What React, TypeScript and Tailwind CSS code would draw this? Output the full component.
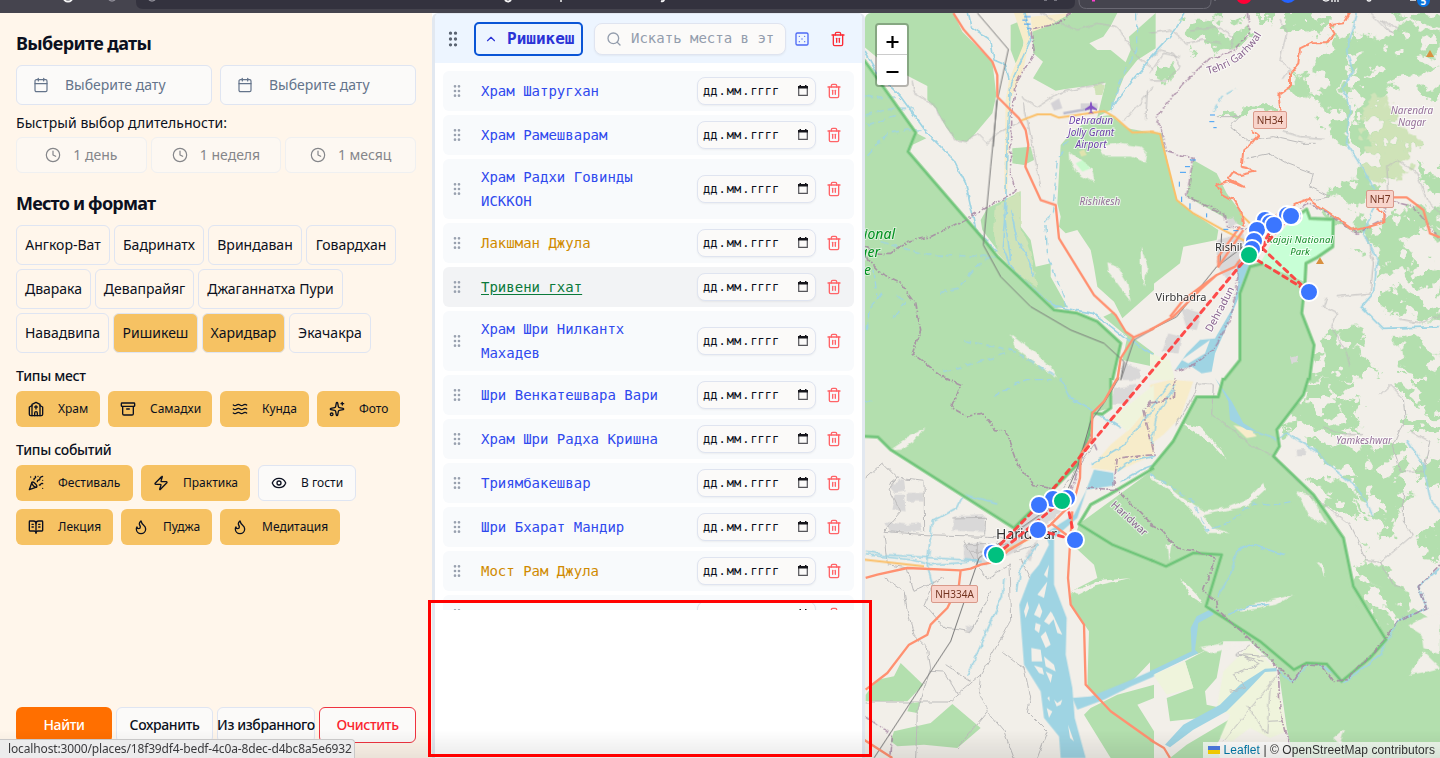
import {
  Archive,
  BookOpenText,
  Calendar,
  ChevronUp,
  Clock,
  Dice5,
  Eye,
  Flame,
  GripVertical,
  PartyPopper,
  Search,
  Sparkles,
  Trash2,
  Waves,
  Zap,
} from "lucide-react";
import type { ComponentType, SVGProps } from "react";

type IconType = ComponentType<{ size?: number; className?: string }>;

function Church({ size = 16, className }: { size?: number; className?: string }) {
  return (
    <svg
      width={size}
      height={size}
      viewBox="0 0 24 24"
      fill="none"
      stroke="currentColor"
      strokeWidth="2"
      strokeLinecap="round"
      strokeLinejoin="round"
      className={className}
    >
      <path d="m18 7 4 2v11a2 2 0 0 1-2 2H4a2 2 0 0 1-2-2V9l4-2" />
      <path d="M14 22v-4a2 2 0 0 0-4 0v4" />
      <path d="M18 22V5l-6-3-6 3v17" />
      <path d="M12 7v5M10 9h4" />
    </svg>
  );
}

type Chip = { label: string; width: string; active?: boolean; icon?: IconType };

const cityRows: Chip[][] = [
  [
    { label: "Ангкор-Ват", width: "w-[94px]" },
    { label: "Бадринатх", width: "w-[90px]" },
    { label: "Вриндаван", width: "w-[94px]" },
    { label: "Говардхан", width: "w-[90px]" },
  ],
  [
    { label: "Дварака", width: "w-[75px]" },
    { label: "Девапрайяг", width: "w-[99px]" },
    { label: "Джаганнатха Пури", width: "w-[145px]" },
  ],
  [
    { label: "Навадвипа", width: "w-[93px]" },
    { label: "Ришикеш", width: "w-[85px]", active: true },
    { label: "Харидвар", width: "w-[83px]", active: true },
    { label: "Экачакра", width: "w-[82px]" },
  ],
];

const placeTypes: Chip[] = [
  { label: "Храм", width: "w-[84px]", active: true, icon: Church },
  { label: "Самадхи", width: "w-[104px]", active: true, icon: Archive },
  { label: "Кунда", width: "w-[89px]", active: true, icon: Waves },
  { label: "Фото", width: "w-[83px]", active: true, icon: Sparkles },
];

const eventRows: Chip[][] = [
  [
    { label: "Фестиваль", width: "w-[117px]", active: true, icon: PartyPopper },
    { label: "Практика", width: "w-[109px]", active: true, icon: Zap },
    { label: "В гости", width: "w-[98px]", icon: Eye },
  ],
  [
    { label: "Лекция", width: "w-[97px]", active: true, icon: BookOpenText },
    { label: "Пуджа", width: "w-[91px]", active: true, icon: Flame },
    { label: "Медитация", width: "w-[120px]", active: true, icon: Flame },
  ],
];

type Place = { name: string; tone: string; tall?: boolean; hovered?: boolean };

const BLUE = "text-[#2f49ee]";
const AMBER = "text-[#d08a00]";

const places: Place[] = [
  { name: "Храм Шатругхан", tone: BLUE },
  { name: "Храм Рамешварам", tone: BLUE },
  { name: "Храм Радхи Говинды ИСККОН", tone: BLUE, tall: true },
  { name: "Лакшман Джула", tone: AMBER },
  { name: "Тривени гхат", tone: "text-[#0b7a3b] underline underline-offset-2", hovered: true },
  { name: "Храм Шри Нилкантх Махадев", tone: BLUE, tall: true },
  { name: "Шри Венкатешвара Вари", tone: BLUE },
  { name: "Храм Шри Радха Кришна", tone: BLUE },
  { name: "Триямбакешвар", tone: BLUE },
  { name: "Шри Бхарат Мандир", tone: BLUE },
  { name: "Мост Рам Джула", tone: AMBER },
  { name: "Храм Бхараты", tone: "text-[#8f9cf6]" },
];

function BrowserBar() {
  return (
    <div className="h-[13px] w-full shrink-0 overflow-hidden bg-[#45444e]">
      <svg width="1440" height="13" viewBox="0 0 1440 13" className="block">
        <path d="M136 0h939v2q0 7-7 7H143q-7 0-7-7z" fill="#33323e" />
        <path d="M1079 -5v6q0 7.500 7.500 7.500h117q7.500 0 7.500-7.500v-6" fill="none" stroke="#6a6973" />
        <circle cx="68" cy="-3" r="4.500" fill="none" stroke="#f4f4f5" strokeWidth="2" />
        <path d="M109 0q3 2 6 0M149 0q3 2 6 0M1044 0h3M1054 0h3" stroke="#8d8c96" strokeWidth="1.500" fill="none" />
        <path d="M505 0q3 3 6 0M661 1q3 1 3-2" stroke="#f4f4f5" strokeWidth="2" fill="none" />
        <path d="M561 0v2" stroke="#f4f4f5" strokeWidth="1.500" />
        <path d="M1092 0h3" stroke="#ff3fd0" strokeWidth="3" />
        <path d="M1215 0v1" stroke="#85848d" />
        <circle cx="1244" cy="-4" r="8" fill="#ff0035" />
        <circle cx="1288" cy="-6" r="9" fill="#2463ff" />
        <path d="M1323 0q3 2 6 0M1332 0v2M1335 0v2M1338 0v2M1367 0q2 2 4 0M1410 0h6" stroke="#f4f4f5" strokeWidth="1.400" fill="none" />
        <circle cx="1423.500" cy="0.500" r="6.500" fill="#0a74e0" />
        <text x="1420.500" y="4.500" fill="#fff" fontSize="10" fontWeight="700" fontFamily="Noto Sans">5</text>
      </svg>
    </div>
  );
}

function DateButton() {
  return (
    <div className="flex h-10 flex-1 items-center gap-4 rounded-md border border-[#dfe5f2] bg-[#fbfaf9] pl-4 text-[#64748b]">
      <Calendar size={16} strokeWidth={1.8} />
      <span className="pb-0.5 text-[14px]">Выберите дату</span>
    </div>
  );
}

function TypeChip({ chip }: { chip: Chip }) {
  const Icon = chip.icon as IconType;
  return (
    <div
      className={`flex h-9 items-center gap-[14px] rounded-md text-[12px] whitespace-nowrap ${chip.width} ${
        chip.active ? "bg-[#f6c263] pl-3" : "border border-[#dfe5f2] bg-[#fbfaf9] pl-[12px]"
      }`}
    >
      <Icon size={16} className="shrink-0" />
      <span>{chip.label}</span>
    </div>
  );
}

function Filters() {
  return (
    <aside className="flex w-[432px] shrink-0 flex-col bg-[#fff6eb] px-4 pt-4 text-[#0b1020]">
      <h2 className="h-7 text-[18px] leading-7 font-bold tracking-[-0.6px]">Выберите даты</h2>
      <div className="mt-2 flex gap-2">
        <DateButton />
        <DateButton />
      </div>
      <div className="mt-2 h-5 text-[14px] leading-5 tracking-[0.04px]">Быстрый выбор длительности:</div>
      <div className="mt-1 flex gap-1">
        {["1 день", "1 неделя", "1 месяц"].map((label) => (
          <div
            key={label}
            className="flex h-9 flex-1 items-center justify-center gap-3 rounded-md border border-[#eff0f1] bg-[#fdf8f2] text-[14px] text-[#85868a]"
          >
            <Clock size={16} strokeWidth={1.8} />
            <span className="pb-0.5">{label}</span>
          </div>
        ))}
      </div>
      <h2 className="mt-4 h-7 text-[18px] leading-7 font-bold tracking-[-0.8px]">Место и формат</h2>
      <div className="mt-2 flex flex-col gap-1">
        {cityRows.map((row, i) => (
          <div key={i} className="flex gap-1">
            {row.map((c) => (
              <div
                key={c.label}
                className={`flex h-10 items-center justify-center rounded-md border border-[#dfe5f2] pb-0.5 text-[14px] whitespace-nowrap ${c.width} ${
                  c.active ? "bg-[#f6c263]" : ""
                }`}
              >
                {c.label}
              </div>
            ))}
          </div>
        ))}
      </div>
      <h3 className="mt-[13px] h-5 text-[14px] leading-5 font-medium tracking-[-0.3px]">Типы мест</h3>
      <div className="mt-[5px] flex gap-2">
        {placeTypes.map((c) => (
          <TypeChip key={c.label} chip={c} />
        ))}
      </div>
      <h3 className="mt-[13px] h-5 text-[14px] leading-5 font-medium tracking-[-0.3px]">Типы событий</h3>
      <div className="mt-[5px] flex flex-col gap-2">
        {eventRows.map((row, i) => (
          <div key={i} className="flex gap-2">
            {row.map((c) => (
              <TypeChip key={c.label} chip={c} />
            ))}
          </div>
        ))}
      </div>
      <div className="mt-auto mb-[15px] flex gap-1 text-[14px] font-medium tracking-[-0.38px] whitespace-nowrap">
        <div className="flex h-9 w-24 items-center justify-center rounded-md bg-[#ff6f00] pb-0.5 text-white">Найти</div>
        <div className="flex h-9 w-[97px] items-center justify-center rounded-md border border-[#dfe5f2] bg-[#fbfaf9] pb-0.5">Сохранить</div>
        <div className="flex h-9 w-[98px] items-center justify-center rounded-md border border-[#dfe5f2] bg-[#fbfaf9] pb-0.5">Из избранного</div>
        <div className="flex h-9 w-[97px] items-center justify-center rounded-md border border-[#ef3340] bg-[#fbfaf9] pb-0.5 text-[#fa2430]">Очистить</div>
      </div>
    </aside>
  );
}

function DateField() {
  return (
    <div className="flex h-7 w-[119px] shrink-0 items-center rounded-lg border border-[#dfe4f0] bg-[#fbfaf9] pl-1 text-[12px] text-[#0b1020] shadow-xs">
      <span className="px-px">дд</span>.<span className="px-px">мм</span>.<span className="px-px">гггг</span>
      <svg width="10" height="11" viewBox="0 0 10 11" className="mr-[7px] mb-px ml-auto">
        <path d="M.7 2.500v7.800h8.600V2.500z" fill="none" stroke="#55555a" strokeWidth="1.200" />
        <path d="M0 1h10v2.500H0zM1.500 0h1.500v1H1.500zM7 0h1.500v1H7z" fill="#15151b" />
      </svg>
    </div>
  );
}

function PlaceRow({ place }: { place: Place }) {
  return (
    <div
      className={`flex shrink-0 items-center rounded-md pr-3 pl-[6px] ${place.tall ? "h-[60px]" : "h-10"} ${
        place.hovered ? "bg-[#f2f3f5]" : "bg-[#f8fafc]"
      }`}
    >
      <GripVertical size={16} className="text-[#99a1af]" />
      <div className={`ml-4 w-[190px] text-[14px] leading-6 ${place.tone}`}>{place.name}</div>
      <div className="ml-auto">
        <DateField />
      </div>
      <Trash2 size={16} className="ml-[10px] shrink-0 text-[#ff6468]" />
    </div>
  );
}

function RoutePanel() {
  return (
    <section className="flex w-[433px] shrink-0 flex-col overflow-hidden rounded-t-md border-x-[3px] border-t border-[#e2e8f0] bg-white font-['DejaVu_Sans_Mono',monospace]">
      <div className="flex h-[596px] shrink-0 flex-col overflow-hidden">
        <div className="flex h-[49px] shrink-0 items-center bg-[#edf5ff] pl-2">
          <GripVertical size={20} className="text-[#5b6472]" />
          <div className="ml-[11px] flex h-[34px] w-[109px] items-center rounded-[5px] border-2 border-[#0a55d6] pl-2 text-[16px] font-bold text-[#2a33d6]">
            <ChevronUp size={14} className="mr-[9px]" />
            Ришикеш
          </div>
          <div className="ml-[11px] flex h-8 w-[192px] items-center rounded-lg border border-[#dfe4f0] bg-[#fbfaf9] pl-[11px] text-[14px] whitespace-nowrap text-[#939dad] shadow-xs">
            <Search size={16} className="mr-[9px]" />
            Искать места в эт
          </div>
          <Dice5 size={16} className="ml-2 text-[#4c68f5]" />
          <Trash2 size={16} className="ml-5 text-[#fb2c36]" />
        </div>
        <div className="flex flex-col gap-1 px-2 pt-2">
          {places.map((p) => (
            <PlaceRow key={p.name} place={p} />
          ))}
        </div>
      </div>
    </section>
  );
}

/* Each map tile uses its own 870x1140 grid, drawn at one third of that size. */
const tiles = ["translate(0 0)", "translate(858 0)", "translate(0 1134)", "translate(858 1134)"];

type Shape = [number, string];

const forest: Shape[] = [
  [0, "M0 39H268L295 95 385 185 397 285 385 340 330 405 308 425 275 420 245 380 215 325 190 300 190 258 145 235 60 190 0 140Z"],
  [0, "M0 180L155 398 187 415 138 438 132 455 360 720 400 770 570 930 640 940 700 965 770 1030 745 1140H0Z"],
  [0, "M505 90L560 70 625 39H760L740 78 718 110 676 130 700 150 740 150 785 187 800 150 795 110 875 39V145L820 180 780 230 740 330 700 350 725 248 690 255 600 268 575 272 507 235 537 185 508 160Z"],
  [0, "M440 75L465 65 480 110 475 160 455 190 440 150Z"],
  [0, "M590 435L620 400 660 370 700 350 740 345 790 385 870 400V870L775 955 750 905 700 860 690 800 680 750 640 690 605 700 585 680 590 650 580 610 585 520Z"],
  [0, "M445 445L500 440 510 480 480 495 445 490Z"],
  [0, "M350 660L370 625 470 575V680L500 720 515 800 560 790 560 830 610 920 570 925 430 790 400 750 355 690Z"],
  [0, "M718 950L750 935 790 1000 870 1060V1100L775 1080 790 1010Z"],
  [1, "M0 395L35 400 60 520 80 600 130 640 205 690 200 720 100 740 90 790 0 860Z"],
  [1, "M130 480L200 520 230 580 275 640 280 680 220 650 110 590Z"],
  [1, "M340 790L465 845 455 940 492 1035 478 1140H222L240 1115 270 1080V880L300 800Z"],
  [2, "M0 0H740V90L685 105 675 170 640 260 570 330 500 400 450 450 80 215 45 175 0 175Z"],
  [2, "M645 438L875 270V835L780 935 700 957 670 925 675 760 620 680 622 640 700 600 690 560 625 500Z"],
  [2, "M5 950L40 905 90 895 110 855 178 920 130 970H5Z"],
  [2, "M90 1060L200 1035 265 978 350 1050 280 1110 180 1100 100 1105 80 1090Z"],
  [2, "M680 990L760 950 870 920V960L820 980 870 1060V1140H740L660 1010Z"],
  [2, "M140 975L170 972 160 1005 130 1000Z"],
  [3, "M0 275L65 190 140 60 200 55 220 0H475L460 50 380 155 388 205 370 235 490 350 580 480 610 625 708 785 720 750 790 690 870 740V1140H430L410 1050 385 870 300 790 220 790 150 825 135 830 0 890Z"],
  [3, "M105 850L220 790 200 900 165 940 170 980 215 990 150 1020 60 1030 50 960 130 930Z"],
  [3, "M110 1100L245 1020 200 1100 210 1140H60Z"],
];

const mottled: Shape[] = [
  [1, "M300 39H535L530 90 500 105 450 85 420 110 370 60Z"],
  [1, "M95 60L180 50 290 60 300 100 260 140 200 170 190 140 130 160 110 130Z"],
  [1, "M20 200L80 205 60 250 20 230Z"],
  [1, "M620 85L680 120 760 75 870 90V150L800 180 870 210 780 230 730 250 700 290 650 320 600 300 580 260 610 220 590 150Z"],
  [1, "M540 100L600 80 610 200 575 260 600 330 590 430 560 440 540 400 500 395 500 350 560 340 540 320 480 300 430 290 410 250 460 220 500 240 475 190 540 150Z"],
  [1, "M730 20H880V80L800 60 730 70Z"],
  [1, "M620 320L700 300 760 400 800 430 770 500 700 560 640 500 600 430Z"],
  [1, "M800 270L880 250V290L820 300Z"],
  [1, "M790 480L880 500V580L820 570Z"],
  [1, "M600 520L640 500 670 560 640 620 560 600 530 560 590 560Z"],
  [1, "M500 610L620 690 600 620 640 640 680 700 720 640 880 610V730L830 700 760 720 800 780 880 800V880L780 850 730 810 690 840 680 740 640 700 560 680Z"],
  [1, "M690 850L760 870 840 920 880 940V970L750 960 690 910Z"],
  [1, "M495 1020L560 990 640 980 640 1040 600 1050 680 1100 690 1140H485Z"],
  [1, "M740 1010L820 1030 880 1080V1150L760 1110Z"],
  [1, "M200 345L290 320 390 318V340L310 335 250 350Z"],
  [1, "M590 750L620 745 640 770 600 770Z"],
  [3, "M470 20L560 0 610 20 560 60 640 80 600 120 640 150 580 160 620 200 500 150 400 160 440 80Z"],
  [3, "M400 170L480 210 560 280 640 330 660 390 700 400 740 360 700 300 640 270 660 220 600 200 560 210 480 170 410 160Z"],
  [3, "M640 230L740 200 770 260 740 300 780 350 730 470 700 460 640 400 610 350Z"],
  [3, "M750 0H880V120L800 80 760 60Z"],
  [3, "M760 100L880 150V190L830 170 780 160Z"],
  [3, "M790 260L880 230V340L830 320 800 280Z"],
  [3, "M480 300L540 280 600 340 640 420 560 400 520 350Z"],
  [3, "M800 470L880 420V550L820 540Z"],
  [3, "M590 560L640 550 720 580 770 640 780 700 700 780 610 630Z"],
  [3, "M640 490L700 500 690 545 650 540Z"],
];

const scrub: Shape[] = [
  [0, "M395 620L470 575V680L500 760 520 860 460 820 400 760 390 700Z"],
  [0, "M690 255L722 255 715 285 695 285Z"],
];

const brokenScrub: Shape[] = [
  [1, "M650 300L710 290 740 340 800 420 780 500 700 560 640 520 620 470 680 450 640 400Z"],
];

const sand: Shape[] = [
  [0, "M450 39H490L500 100 480 200 440 300 430 575 420 575 425 300 435 240 480 130Z"],
  [0, "M500 50L620 39 560 75 505 95Z"],
  [2, "M860 70L800 150 740 200 680 270 760 280 870 230V80Z"],
  [3, "M0 20L60 5 130 10 90 120 40 170 0 200Z"],
  [3, "M250 142L300 150 320 175 290 180Z"],
];

const farm: Shape[] = [
  [3, "M10 890L105 850 130 930 50 950Z"],
  [3, "M220 880L300 800 375 870 410 1060 360 1080 300 1050 245 1090 210 1080 240 1010 200 990Z"],
  [2, "M745 120L870 20V70L790 160Z"],
  [1, "M0 1060L60 1080 75 1140H0Z"],
];

const bare: Shape[] = [
  [0, "M617 455L650 480 680 505 690 548 640 520 620 490Z"],
  [0, "M700 440L760 430 830 440 850 460 845 488 800 470 720 470Z"],
  [0, "M730 790L760 800 790 850 800 905 765 860 735 820Z"],
  [0, "M830 740L850 800 840 860 830 820Z"],
  [0, "M440 1000L490 1040 560 1100 580 1135 500 1080 460 1050Z"],
  [2, "M75 218L130 180 185 148 150 190 110 215Z"],
  [2, "M620 640L700 610 800 600 690 625 640 650Z"],
  [3, "M90 135L150 150 210 210 230 245 190 200 130 160Z"],
  [3, "M0 290L60 328 100 360 165 400 240 385 290 365 340 315 345 335 290 385 190 405 160 412 190 450 240 465 170 465 130 400 60 340 0 300Z"],
  [3, "M440 340L480 350 530 440 480 420Z"],
  [3, "M500 550L520 560 525 595Z"],
  [3, "M150 810L220 800 300 790 280 800 180 825Z"],
  [3, "M600 590L700 630 660 615Z"],
  [3, "M550 1080L585 1050 570 1100Z"],
  [3, "M780 890L820 820 870 870 830 880Z"],
  [3, "M775 745L820 720 870 710V830L820 810 815 770Z"],
  [3, "M140 20L195 10 180 60 150 50Z"],
  [3, "M250 700L330 675 430 650 380 680 280 700Z"],
  [3, "M50 500L65 495 55 550Z"],
  [3, "M90 600L140 650 160 680 120 650Z"],
];

const urban: Shape[] = [
  [1, "M200 720L280 700 290 750 230 840 200 800Z"],
  [1, "M90 920L155 940 140 990 110 985Z"],
  [1, "M55 1000L95 1010 85 1060 35 1055Z"],
  [1, "M225 660L250 650 262 670 240 685Z"],
  [1, "M420 1070L445 1065 440 1090 425 1092Z"],
  [2, "M75 322L120 305 125 340 95 345ZM128 345L178 345 178 370 128 370ZM95 350L120 350 125 400 85 395ZM60 430L130 440 170 435 175 460 80 465Z"],
  [2, "M270 415L360 412 365 462 265 458Z"],
  [2, "M300 500L350 490 370 530 440 480 500 400 600 340 620 380 520 460 450 520 370 560 300 550Z"],
  [2, "M305 740L330 745 320 765Z"],
  [2, "M480 540L520 480 500 550Z"],
  [2, "M750 30L820 20 790 80 740 80Z"],
  [0, "M775 1085L830 1110V1140H770Z"],
  [3, "M440 215L465 213 465 235 442 235Z"],
];

const water: Shape[] = [
  [2, "M690 275L665 340 630 410 560 455 545 470 555 500 525 560 500 590 466 680 480 860 530 940 540 1020 585 1075 590 1140H665L632 1020 625 930 605 830 608 720 570 620 570 480 640 420 668 335 750 322 748 285Z"],
  [2, "M625 960L680 955 790 910 870 875V895L800 925 720 965 640 995Z"],
  [3, "M195 0L245 70 280 135 320 160 290 155 240 125 235 70Z"],
  [3, "M0 880L125 820 122 750 140 715 190 690 190 710 145 735 135 815 145 825 0 895Z"],
  [3, "M380 870L345 872 270 920 210 980 100 1040 45 1100 60 1108 130 1055 230 1000 290 940 345 882 380 880Z"],
  [1, "M260 785L330 770 300 800 275 870 230 980 195 1060 185 1115 155 1120 125 1100 75 1110 110 1060 150 1020 195 1015 250 920 265 850Z"],
];

const islands: Shape[] = [
  [2, "M480 700L490 670 495 690 485 720ZM510 710L525 675 535 700 528 720ZM515 735L530 740 525 765 512 755ZM540 730L560 700 572 720 555 740ZM530 775L545 760 560 800 545 810ZM502 810L530 815 535 850 503 850ZM540 835L570 860 575 880 545 865ZM510 862L535 870 540 890 525 885ZM545 880L565 890 560 915ZM562 700L595 770 580 765ZM520 650L550 610 540 660ZM540 590L555 560 550 600ZM548 990L565 1000 555 1020ZM612 1040L630 1090 618 1080ZM550 960L556 955 557 970ZM570 965L580 975 595 965 590 980 578 985Z"],
  [1, "M95 1080L180 1020 165 1060 115 1090Z"],
];

const streams: Shape[] = [
  [0, "M0 150L40 220 110 290 190 400 270 480 305 550 325 640 335 690 400 755"],
  [0, "M480 39L500 120 440 250 430 400 425 620 415 740 440 800 500 860 570 920 690 940 780 1010 870 1065"],
  [0, "M310 39L320 80 380 120 390 180 425 195 435 240"],
  [0, "M870 165L800 250 740 330"],
  [0, "M440 630L460 720 490 770 510 830M420 640L440 780"],
  [1, "M105 39L60 110 0 175"],
  [1, "M622 39L590 150 610 215 578 265 600 320 590 430 660 540 680 600 640 700 682 780 670 880 635 920 700 985 870 980"],
  [2, "M205 618L190 560 205 430 280 390 300 350 400 375"],
  [2, "M420 600L415 655 310 890"],
  [2, "M590 0L620 60 690 100 770 150M680 260L780 200 870 90M760 280L800 250 870 235M770 310L830 275 870 260"],
  [2, "M5 530L140 545 200 560 350 550M5 520L60 530 340 548M460 640L470 570 520 500"],
  [3, "M310 160L380 185 410 165 500 220 560 280 620 330 650 370 670 415M770 185L820 260 840 360 870 400"],
  [3, "M5 200L20 110 80 20M0 90L60 20"],
  [3, "M200 660L245 580 260 520 300 498 400 530M230 710L300 685 360 680"],
  [3, "M385 875L425 912 475 858 530 868 580 915 690 830 740 730 830 690 805 625 870 570"],
];

const dashedStreams: Shape[] = [
  [0, "M5 285L50 295 100 290M5 345L90 325 150 325M10 465L70 400 130 390 190 390M10 375L100 345"],
  [0, "M610 420L580 480 565 640 545 660 550 760 575 830 610 920"],
  [0, "M50 725L190 765 400 770M380 770L340 800 280 865 225 880"],
  [0, "M10 990L15 930 60 870M90 950L125 905 90 880M30 810L40 900M300 1022L440 1050 580 1130M240 1115L400 1070 440 1050"],
  [0, "M818 39V150L770 240 745 320"],
  [1, "M190 335L215 290 260 265"],
  [2, "M390 58L450 20 490 5 580 5M0 70L30 68"],
  [3, "M0 290L70 330 130 370 170 460 240 430 310 375 360 382 430 370"],
];

const lanes: Shape[] = [
  [0, "M145 245L150 275 210 315 240 370 275 420 310 425 340 400 370 430 400 400 470 365"],
  [0, "M530 39L590 70 640 90 700 70 760 80 820 170 870 210M470 290L520 320 580 280 720 250M480 310L530 560M780 365L870 260M845 360L850 270"],
  [1, "M0 100L60 90 110 130 160 120 210 130M0 220L40 160 90 170M390 60L410 100 390 180 420 210 400 240"],
  [1, "M0 180L30 150 70 160 90 200 50 240 0 240M120 90L200 80 250 110 240 150"],
  [1, "M200 350L270 350 240 380 290 420 370 410 460 430 500 430M290 475L360 460 410 490 490 520 480 560 540 590 490 600"],
  [1, "M400 395L450 410 520 415M660 39L700 80 730 100 690 60 750 90"],
  [1, "M720 620L710 500 740 480 800 520 830 600 870 640M530 890L520 920 560 940 545 980 590 1060 600 1100M560 890L660 880 670 790 650 710M750 960L800 970 870 950"],
  [2, "M5 300L55 255 100 300 75 330 110 400 60 460 180 470 370 475 480 480M180 310L182 460M60 470L70 560 130 570 150 640 240 600M75 320L100 300 180 310"],
  [2, "M65 600L120 640 130 700 150 770 190 810 200 870 160 1000 155 1140M210 610L180 680 240 750 320 760 380 640M200 880L240 882 270 930 280 950M320 910L245 860M435 560L440 730 350 890 345 940 370 1000 280 1110M370 1000L420 1060 450 1140M415 820L480 870 500 960 490 1000 550 1060 520 1140M5 972H255L350 890"],
  [2, "M265 420L365 418 362 470M300 490L340 560 370 600 440 560M600 330L640 270 690 200M310 500H430M320 520H420M400 490V550M340 490V560M450 520L520 500M470 540L500 600"],
  [3, "M80 140L135 40 140 15 190 20 185 110 240 150 300 200 370 235M370 235L480 350 600 440 650 545 690 550 730 620 760 630"],
  [3, "M690 50L720 20 760 60 765 120 730 200 750 280 820 280 840 190 780 160M760 340L760 430 790 470 690 555M520 150L600 170 640 170"],
  [3, "M350 835L270 830 330 860 250 890 290 930 240 940M300 800L260 830 340 850M380 895L220 1090M290 980L350 1070 360 930M355 1030L395 1028"],
];

const railways: Shape[] = [
  [0, "M340 39L433 148 400 300 380 500 358 735 410 830 500 920 620 990 720 1030 780 1085 770 1140M388 440L398 300M870 985L810 1020 770 1140"],
  [1, "M215 700L210 790M280 740L200 800 80 950 0 990"],
  [2, "M765 0L720 75 680 130 640 270 600 360 400 500 345 540 260 790 30 1140"],
];

const boundaries: Shape[] = [
  [0, "M620 39L580 70 500 90 512 160 460 240 440 350 440 520 455 575 300 660 200 710 130 725 80 760 40 760 0 740M5 770L55 825 110 850 155 910 170 990 145 1060 210 1110 250 1140"],
  [1, "M292 39L300 100 240 160 180 175 110 240 60 300 20 350 50 455 130 475 110 590 220 640 230 680 300 690M265 785L260 880 240 960 190 1050 130 1095 75 1115"],
  [1, "M430 640L470 610 500 620 620 700 700 660 710 600 790 620 870 720"],
  [2, "M240 0L290 20 265 90 310 115 355 105 395 155 425 160 460 260 510 320 570 330M670 330L760 335 870 445M860 70L840 100 870 230 760 240 750 320"],
  [2, "M0 1010L85 1075 80 1140M620 340L680 170 700 220"],
  [3, "M0 440L40 460 80 510 140 520 195 540 160 640 200 670 205 700 280 765 370 850 385 880 390 990 420 1110"],
  [3, "M385 870L400 875 430 910 460 860 520 865 550 910 590 905 700 790 740 730 830 690 805 625 870 560M0 75L70 60 75 0"],
];

const reserves: Shape[] = [
  [0, "M0 180L155 398 132 455 360 720 400 770 570 930 640 940 700 965 770 1030 745 1140"],
  [1, "M430 655L470 628 480 655 550 658 548 740 500 773 468 790 465 845 455 940 492 1035 478 1140M340 790L300 800 270 880V1080L222 1140"],
  [2, "M0 175L42 177 80 215 450 450 570 330 640 260 675 170 685 105 715 108 740 90V0M870 270L735 350 680 380 645 438 745 500 870 550"],
  [3, "M475 0L460 50 380 155 388 205 370 235 490 350 580 480 610 625 708 785 660 840 575 910 530 858 470 855 432 875 330 790 168 685 215 530 130 525 48 565 0 545M220 0L205 57 140 57 70 190 0 275"],
];

const yellowRoads: Shape[] = [
  [0, "M470 362L520 343 560 343 585 353 720 333 750 350 805 398 870 395"],
  [1, "M0 395L30 402 60 520 80 600 130 640 220 690 290 725M270 640L310 680"],
  [2, "M0 545L180 565M400 530L500 480"],
];

const trunkRoads: Shape[] = [
  [0, "M268 39L300 90 385 185 400 225 400 290 465 355 485 390 493 435 484 500 530 600 575 615 585 715 690 885 755 945 785 995 810 1012 870 985M810 1012L770 1075 760 1140"],
  [1, "M730 592L770 592 820 630 840 700 870 712M300 760L270 780 255 800 200 825 150 870 70 950 0 990M280 690L205 800 205 770 270 680M200 825L100 900 60 950"],
  [2, "M760 0L720 70 685 105 683 180 650 230 648 300 630 370 560 440 430 520 400 550 350 560 320 572 290 577 130 570 40 590 5 600M290 577L285 620 250 690 200 740 190 770 135 800 70 885 5 935M625 400L618 500 612 600 620 680 660 740 665 920 740 1000 870 1092M0 1085L85 1140M560 435L620 480"],
  [3, "M0 1085L42 1110 60 1140"],
];

const windingRoads: Shape[] = [
  [1, "M598 39L580 70 540 75 555 100 530 130 480 130 450 145 445 190 420 220 420 260 385 285 392 335M305 390L325 405 300 435 280 450 275 500 295 505 315 515 270 525 250 515 235 535 280 560 240 545 200 555 215 580 250 600 275 640 280 680M380 650L440 610 475 597 540 640 610 690 640 685 700 668 700 640 680 625"],
];

function Layer({ shapes, ...rest }: { shapes: Shape[] } & SVGProps<SVGGElement>) {
  return (
    <g {...rest}>
      {shapes.map(([t, d], i) => (
        <path key={i} d={d} transform={tiles[t]} />
      ))}
    </g>
  );
}

const pins: [number, number, string][] = [
  [1287, 215, "#3b76ff"],
  [1293, 216, "#3b76ff"],
  [1265, 220, "#3b76ff"],
  [1270, 223, "#3b76ff"],
  [1257, 230, "#3b76ff"],
  [1274, 225, "#3b76ff"],
  [1291, 216, "#3b76ff"],
  [1254, 241, "#3b76ff"],
  [1252, 249, "#3b76ff"],
  [1249, 255, "#00c07f"],
  [1309, 292, "#3b76ff"],
  [1067, 498, "#3b76ff"],
  [1053, 499, "#3b76ff"],
  [1039, 505, "#3b76ff"],
  [1062, 501, "#00c07f"],
  [1038, 530, "#3b76ff"],
  [1075, 540, "#3b76ff"],
  [992, 553, "#3b76ff"],
  [996, 555, "#00c07f"],
];

function MapCanvas() {
  return (
    <svg width="575" height="745" viewBox="865 13 575 745" className="block" fontFamily="Noto Sans">
      <defs>
        <filter id="rough" filterUnits="userSpaceOnUse" x="0" y="0" width="1740" height="2280">
          <feTurbulence type="fractalNoise" baseFrequency="0.022" numOctaves="4" seed="4" result="edge" />
          <feDisplacementMap in="SourceGraphic" in2="edge" scale="80" xChannelSelector="R" yChannelSelector="G" result="ragged" />
          <feTurbulence type="fractalNoise" baseFrequency="0.018" numOctaves="4" seed="21" />
          <feColorMatrix values="0 0 0 0 0  0 0 0 0 0  0 0 0 0 0  30 0 0 0 -17.400" result="gaps" />
          <feComposite in="ragged" in2="gaps" operator="out" />
        </filter>
        <filter id="wiggle" filterUnits="userSpaceOnUse" x="0" y="0" width="1740" height="2280">
          <feTurbulence type="fractalNoise" baseFrequency="0.04" numOctaves="2" seed="9" />
          <feDisplacementMap in="SourceGraphic" scale="15" xChannelSelector="R" yChannelSelector="G" />
        </filter>
      </defs>
      <rect x="865" y="13" width="575" height="745" fill="#f2efe9" />
      <g transform="translate(864 0) scale(.33333)" strokeLinejoin="round">
        <Layer shapes={forest} fill="#b3dfae" />
        <Layer shapes={mottled} fill="#b3dfae" filter="url(#rough)" />
        <Layer shapes={brokenScrub} fill="#cfe3b8" filter="url(#rough)" />
        <Layer shapes={scrub} fill="#cfe3b8" filter="url(#wiggle)" />
        <Layer shapes={sand} fill="#f7ecca" />
        <Layer shapes={farm} fill="#eff4dc" />
        <Layer shapes={bare} fill="#f2efe9" filter="url(#wiggle)" />
        <Layer shapes={urban} fill="#d9d8d8" filter="url(#wiggle)" />
        <path transform={tiles[1]} d="M430 655L470 628 480 655 550 658 548 740 500 773 468 790 465 845 330 790 370 720Z" fill="#c8ffd6" />
        <g transform={tiles[0]}>
          <path d="M635 490L655 480 680 505 655 515Z" fill="#c8facc" />
          <path d="M645 455L660 448 668 465 652 470Z" fill="#dfe3ae" />
          <path d="M598 340L700 322" stroke="#bbbccd" strokeWidth="8" />
          <path d="M560 310L585 295 595 325 570 332ZM650 310H700V325H650Z" fill="#d4d2d6" />
        </g>
        <Layer shapes={water} fill="#9fd4e3" />
        <Layer shapes={islands} fill="#f2efe9" />
        <Layer shapes={lanes} fill="none" stroke="#bdbcbc" strokeWidth="3" filter="url(#wiggle)" />
        <g filter="url(#wiggle)">
          <Layer shapes={streams} fill="none" stroke="#9fd4e3" strokeWidth="5" />
          <Layer shapes={dashedStreams} fill="none" stroke="#9fd4e3" strokeWidth="4" strokeDasharray="22 12" />
        </g>
        <Layer shapes={reserves} fill="none" stroke="#93d293" strokeWidth="12" opacity=".75" />
        <Layer shapes={reserves} fill="none" stroke="#62c070" strokeWidth="6" opacity=".75" />
        <Layer shapes={boundaries} fill="none" stroke="#a585a2" strokeWidth="5" strokeDasharray="20 5 5 5" opacity=".8" filter="url(#wiggle)" />
        <Layer shapes={railways} fill="none" stroke="#777" strokeWidth="3" />
        <Layer shapes={yellowRoads} fill="none" stroke="#fbc069" strokeWidth="6" />
        <Layer shapes={trunkRoads} fill="none" stroke="#ff9171" strokeWidth="7" />
        <Layer shapes={windingRoads} fill="none" stroke="#ff9171" strokeWidth="6" filter="url(#wiggle)" />
        <g transform={tiles[0]} stroke="#3c9df5" strokeWidth="3">
          <path d="M480 50H500M475 60H490M480 72H500M490 85H500" />
        </g>
        <g transform={tiles[1]} stroke="#3c9df5" strokeWidth="3" fill="none">
          <path d="M180 345H195M178 365H193M190 383H200M120 480H138M105 500H120M90 517H108M88 545V560M95 590V606M120 610V628M170 640V652M220 688H235M250 692H265" />
        </g>
        <path transform={tiles[1]} fill="#d9903f" d="M840 150L852 171H828ZM510 772L522 792H498Z" />
        <path
          transform="translate(681 321) scale(1.5)"
          fill="#8452c4"
          d="M0-11q2 2 2 6v2L12 4V7L2 4 1 9 5 12V13L0 12-5 13V12L-1 9-2 4-12 7V4L-2-3V-5Q-2-9 0-11Z"
        />
      </g>

      <g fontSize="10" textAnchor="middle" stroke="#fff" strokeWidth="2" strokeOpacity=".7" paintOrder="stroke" fontStyle="italic">
        <g fill="#6b3fa8">
          <text x="1091" y="124">Dehradun</text>
          <text x="1091" y="136">Jolly Grant</text>
          <text x="1091" y="148">Airport</text>
        </g>
        <g fill="#96719a">
          <text x="1100" y="205">Rishikesh</text>
          <text x="1412" y="114">Narendra</text>
          <text x="1412" y="126">Nagar</text>
          <text x="1364" y="444">Yamkeshwar</text>
        </g>
        <g fill="#118a24">
          <text x="1300" y="243" fontSize="9.500" textLength="66">Rajaji National</text>
          <text x="1300" y="255" fontSize="9.500">Park</text>
        </g>
      </g>
      <g fill="#009020" fontStyle="italic" fontSize="14" stroke="#fff" strokeWidth="2" strokeOpacity=".5" paintOrder="stroke">
        <text x="895" y="239" textAnchor="end">ional</text>
        <text x="880" y="257" textAnchor="end">ger</text>
        <text x="871" y="275" textAnchor="end">e</text>
      </g>
      <g fill="#8a6590" fontSize="10.500" textAnchor="middle" stroke="#fff" strokeWidth="2" strokeOpacity=".6" paintOrder="stroke">
        <path id="tehri" d="M1205 75Q1245 66 1263 32" fill="none" stroke="none" />
        <text>
          <textPath href="#tehri" startOffset="50%">Tehri Garhwal</textPath>
        </text>
        <text transform="translate(1223 311) rotate(-62)">Dehradun</text>
        <text transform="translate(1127 521) rotate(43)">Haridwar</text>
      </g>
      <g fill="#333" textAnchor="middle" stroke="#fff" strokeWidth="2" strokeOpacity=".7" paintOrder="stroke">
        <text x="1215" y="251" fontSize="11" textAnchor="start">Rishikesh</text>
        <text x="1181" y="301" fontSize="11">Virbhadra</text>
        <text x="1026.500" y="539" fontSize="14">Haridwar</text>
      </g>
      <g fontSize="10" textAnchor="middle">
        <g fill="#f8d4cb" stroke="#d9998a">
          <rect x="1253.500" y="111.500" width="33" height="17" rx="1.500" />
          <rect x="1366.500" y="190.500" width="27" height="17" rx="1.500" />
          <rect x="931.500" y="585.500" width="46" height="17" rx="1.500" />
        </g>
        <g fill="#73331f">
          <text x="1270" y="124">NH34</text>
          <text x="1380" y="203">NH7</text>
          <text x="954.500" y="598">NH334A</text>
        </g>
      </g>
      <g fill="none" stroke="#ff3838" strokeOpacity=".9" strokeWidth="3" strokeDasharray="5 5" strokeLinecap="round">
        <path d="M1249 255L1053 489" />
        <path d="M1262 248L1309 292L1249 255M1274 225L1262 246M1285 222L1264 246" />
        <path d="M1039 505L992 553M1062 501L996 555M1067 503L1075 540L1038 530" />
      </g>
      {pins.map(([x, y, fill], i) => (
        <circle key={i} cx={x} cy={y} r="9" fill={fill} stroke="#fff" strokeWidth="2" />
      ))}
    </svg>
  );
}

function MapPanel() {
  return (
    <section className="relative min-w-0 flex-1 overflow-hidden rounded-tl-md">
      <MapCanvas />
      <div className="absolute top-[10px] left-[10px] flex w-[34px] flex-col overflow-hidden rounded border-2 border-black/25 bg-clip-padding">
        {["M9 15.500h12M15 9.500v12", "M9 15.500h12"].map((mark, i) => (
          <div key={i} className={`bg-white ${i === 0 ? "h-[30px] border-b border-[#ccc]" : "h-[30px]"}`}>
            <svg width="30" height="30" viewBox="0 0 30 30" stroke="#000" strokeWidth="2.200" className="block">
              <path transform="translate(0.500 1.500)" d={mark} />
            </svg>
          </div>
        ))}
      </div>
      <div className="absolute right-0 bottom-0 flex h-4 items-center bg-white/75 px-[5px] font-['Liberation_Sans',sans-serif] text-[12px] tracking-[0.075px] whitespace-pre text-[#333]">
        <svg width="12" height="8" viewBox="0 0 12 8" className="mr-[3px]">
          <path fill="#4c7be1" d="M0 0h12v4H0z" />
          <path fill="#ffd500" d="M0 4h12v4H0z" />
        </svg>
        <span className="text-[#0078a8]">Leaflet</span> | © OpenStreetMap contributors
      </div>
    </section>
  );
}

export default function App() {
  return (
    <div className="relative flex h-[758px] w-[1440px] flex-col overflow-hidden bg-white font-['Noto_Sans',sans-serif]">
      <BrowserBar />
      <main className="flex min-h-0 flex-1">
        <Filters />
        <RoutePanel />
        <MapPanel />
      </main>
      <div className="absolute bottom-0 left-0 h-7 w-full bg-linear-to-b from-transparent to-black/8" />
      <div className="absolute top-[600px] left-[428px] h-[157px] w-[444px] border-[3px] border-[#ff0000]" />
      <div className="absolute bottom-0 left-0 flex h-[19px] w-[355px] items-center rounded-tr border-t border-r border-[#c9c8c8] bg-[#ececed] pl-2 text-[12px] tracking-[-0.14px] whitespace-nowrap text-[#3a3a3d]">
        localhost:3000/places/18f39df4-bedf-4c0a-8dec-d4bc8a5e6932
      </div>
    </div>
  );
}
